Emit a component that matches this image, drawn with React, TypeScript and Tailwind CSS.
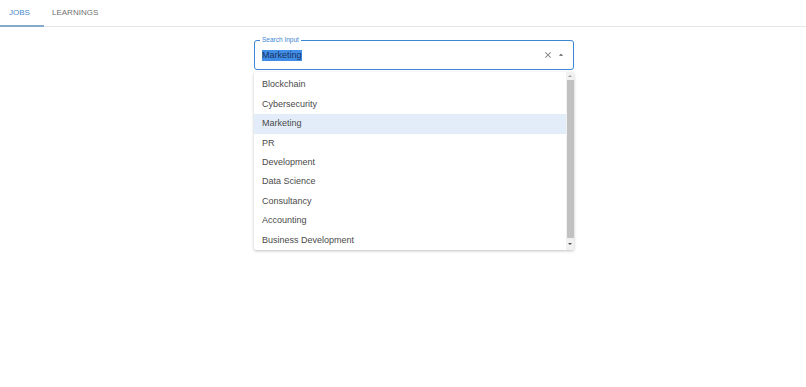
import React from "react";

const items = [
  "Blockchain",
  "Cybersecurity",
  "Marketing",
  "PR",
  "Development",
  "Data Science",
  "Consultancy",
  "Accounting",
  "Business Development",
];

export default function App() {
  return (
    <div className="w-[806px] h-[387px] bg-white overflow-hidden" style={{ fontFamily: "'Liberation Sans', Arial, sans-serif" }}>
      <div className="flex h-[27px] border-b border-[#e6e6e6]">
        <div className="relative w-[44px] flex items-center pl-[9px] text-[8px] text-[#4a88c8] pb-[1px]">
          JOBS
          <div className="absolute left-0 right-0 bottom-[-1px] h-[2px] bg-[#86a9c9]" />
        </div>
        <div className="flex items-center pl-[8px] text-[8px] text-[#6f6f6f] pb-[1px]">
          LEARNINGS
        </div>
      </div>
      <div className="flex pl-[254px]">
        <div className="w-[320px] mt-[13px] relative">
          <div className="relative h-[30px] border-[1.5px] border-[#3c86d4] rounded-[3px] flex items-center pl-[7px] pr-[7px]">
            <div className="absolute left-[5px] top-[-5px] bg-white px-[2px] text-[6.5px] leading-[8px] text-[#3c86d4]">
              Search Input
            </div>
            <span className="text-[9px] leading-[11px] bg-[#3f8de6] text-[#1b3360]">Marketing</span>
            <div className="flex-1" />
            <svg width="10" height="10" viewBox="0 0 24 24" className="mr-[3px]">
              <path d="M19 6.41 17.59 5 12 10.59 6.41 5 5 6.41 10.59 12 5 17.59 6.41 19 12 13.41 17.59 19 19 17.59 13.41 12z" fill="#767676" />
            </svg>
            <svg width="10" height="10" viewBox="0 0 24 24">
              <path d="M7 14l5-5 5 5z" fill="#555" />
            </svg>
          </div>
          <div className="mt-[2px] h-[178px] bg-white rounded-[2px] shadow-[0_1px_3px_rgba(0,0,0,0.25)] flex">
            <div className="flex-1 pt-[3.5px]">
              {items.map((it) => (
                <div
                  key={it}
                  className={`h-[19.4px] flex items-center pl-[8px] text-[9px] text-[#4a4a4a] ${it === "Marketing" ? "bg-[#e3edf9]" : ""}`}
                >
                  {it}
                </div>
              ))}
            </div>
            <div className="w-[8px] bg-[#f1f1f1] flex flex-col items-center">
              <div className="h-[8px] flex items-center justify-center">
                <div className="w-0 h-0 border-l-[2px] border-r-[2px] border-b-[2px] border-l-transparent border-r-transparent border-b-[#a3a3a3]" />
              </div>
              <div className="w-[7px] flex-1 bg-[#c1c1c1]" />
              <div className="h-[12px] flex items-center justify-center">
                <div className="w-0 h-0 border-l-[2px] border-r-[2px] border-t-[2px] border-l-transparent border-r-transparent border-t-[#505050]" />
              </div>
            </div>
          </div>
        </div>
      </div>
    </div>
  );
}
